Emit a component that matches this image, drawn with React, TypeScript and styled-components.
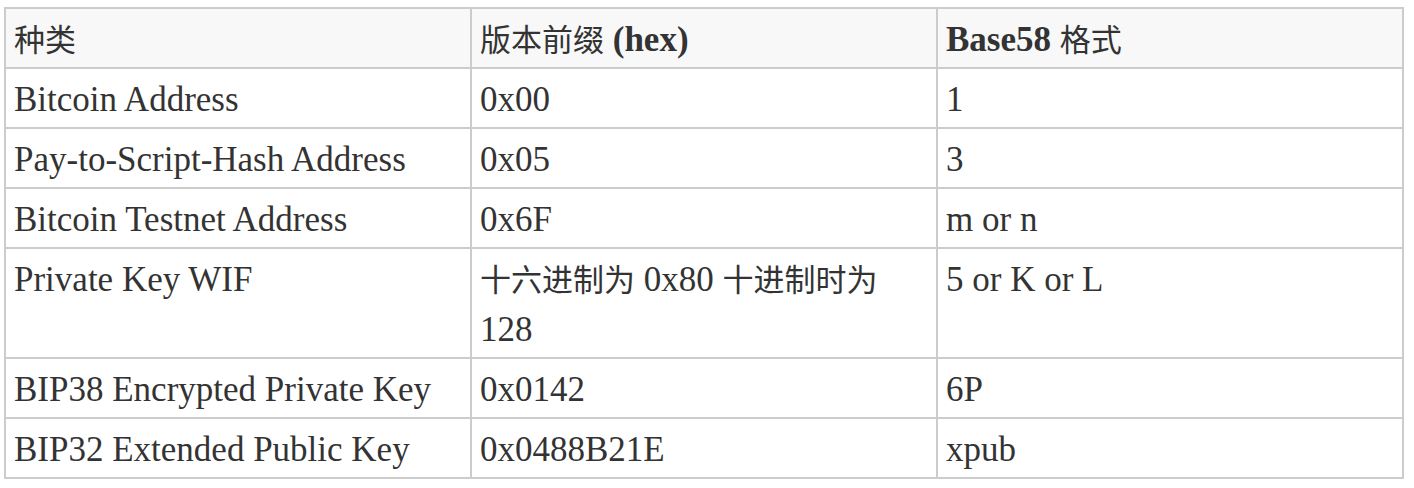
import styled, { createGlobalStyle } from "styled-components";

const GlobalStyle = createGlobalStyle`
  body {
    margin: 0;
    background: #fff;
  }
`;

const Page = styled.div`
  padding: 7px 10px 0 4px;
`;

const Table = styled.table`
  width: 1400px;
  border-collapse: collapse;
  table-layout: fixed;
  border: 2px solid #cccccc;
  font-family: "Liberation Serif", "Noto Sans CJK SC", serif;
  font-size: 35px;
  line-height: 50px;
  color: #333333;
`;

const HeadRow = styled.tr`
  background: #f8f8f8;
`;

const Th = styled.th`
  border: 2px solid #cccccc;
  padding: 6px 8px 2px;
  text-align: left;
  vertical-align: top;
  font-weight: 700;
`;

const Td = styled.td`
  border: 2px solid #cccccc;
  padding: 6px 8px 2px;
  text-align: left;
  vertical-align: top;
  font-weight: 400;
`;

const Cjk = styled.span`
  font-family: "Noto Sans CJK SC", sans-serif;
  font-size: 31px;
  line-height: 1;
  font-weight: 400;
`;

type Row = { kind: string; prefix: React.ReactNode; format: string };

const rows: Row[] = [
  { kind: "Bitcoin Address", prefix: "0x00", format: "1" },
  { kind: "Pay-to-Script-Hash Address", prefix: "0x05", format: "3" },
  { kind: "Bitcoin Testnet Address", prefix: "0x6F", format: "m or n" },
  {
    kind: "Private Key WIF",
    prefix: (
      <>
        <Cjk>十六进制为</Cjk> 0x80 <Cjk>十进制时为</Cjk> 128
      </>
    ),
    format: "5 or K or L",
  },
  { kind: "BIP38 Encrypted Private Key", prefix: "0x0142", format: "6P" },
  { kind: "BIP32 Extended Public Key", prefix: "0x0488B21E", format: "xpub" },
];

export default function App() {
  return (
    <>
      <GlobalStyle />
      <Page>
        <Table>
          <thead>
            <HeadRow>
              <Th>
                <Cjk>种类</Cjk>
              </Th>
              <Th>
                <Cjk>版本前缀</Cjk> (hex)
              </Th>
              <Th>
                Base58 <Cjk>格式</Cjk>
              </Th>
            </HeadRow>
          </thead>
          <tbody>
            {rows.map((r) => (
              <tr key={r.kind}>
                <Td>{r.kind}</Td>
                <Td>{r.prefix}</Td>
                <Td>{r.format}</Td>
              </tr>
            ))}
          </tbody>
        </Table>
      </Page>
    </>
  );
}
